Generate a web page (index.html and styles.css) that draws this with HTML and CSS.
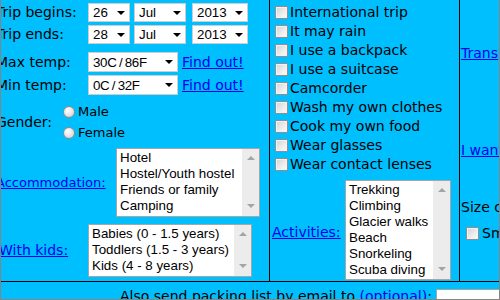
FILE: index.html
```html
<!DOCTYPE html>
<html lang="en">
<head>
<meta charset="utf-8">
<title>Packing list</title>
<link rel="stylesheet" href="styles.css">
</head>
<body>
<div class="frame">
  <div class="table">
    <div class="cell c1">
      <div class="row r-date">
        <span class="lbl w92">Trip begins:</span>
        <span class="sel s-day"><select><option>26</option></select></span>
        <span class="sel s-mon"><select><option>Jul</option></select></span>
        <span class="sel s-year"><select><option>2013</option></select></span>
      </div>
      <div class="row r-date r-date2">
        <span class="lbl w92">Trip ends:</span>
        <span class="sel s-day"><select><option>28</option></select></span>
        <span class="sel s-mon"><select><option>Jul</option></select></span>
        <span class="sel s-year"><select><option>2013</option></select></span>
      </div>
      <div class="row r-temp r-temp1">
        <span class="lbl w92">Max temp:</span>
        <span class="sel s-temp"><select class="tight"><option>30C / 86F</option></select></span>
        <a href="#" class="find">Find out!</a>
      </div>
      <div class="row r-temp r-temp2">
        <span class="lbl w92">Min temp:</span>
        <span class="sel s-temp"><select class="tight"><option>0C / 32F</option></select></span>
        <a href="#" class="find">Find out!</a>
      </div>
      <div class="row r-gender">
        <span class="lbl gender-lbl">Gender:</span>
        <div class="radios">
          <label class="radio-row"><input type="radio" name="g" class="radio"><span>Male</span></label>
          <label class="radio-row"><input type="radio" name="g" class="radio"><span>Female</span></label>
        </div>
      </div>
      <div class="row r-acc">
        <a href="#" class="lbl acc-lbl">Accommodation:</a>
        <div class="listbox acc-box">
          <ul>
            <li>Hotel</li>
            <li>Hostel/Youth hostel</li>
            <li>Friends or family</li>
            <li>Camping</li>
          </ul>
          <div class="sb"><span class="up"></span><span class="down"></span></div>
        </div>
      </div>
      <div class="row r-kids">
        <a href="#" class="lbl kids-lbl">With kids:</a>
        <div class="listbox kids-box">
          <ul>
            <li>Babies (0 - 1.5 years)</li>
            <li>Toddlers (1.5 - 3 years)</li>
            <li>Kids (4 - 8 years)</li>
          </ul>
          <div class="sb"><span class="up"></span><span class="down"></span></div>
        </div>
      </div>
    </div>

    <div class="cell c2">
      <label class="chk-row"><input type="checkbox" class="chk"><span>International trip</span></label>
      <label class="chk-row"><input type="checkbox" class="chk"><span>It may rain</span></label>
      <label class="chk-row"><input type="checkbox" class="chk"><span>I use a backpack</span></label>
      <label class="chk-row"><input type="checkbox" class="chk"><span>I use a suitcase</span></label>
      <label class="chk-row"><input type="checkbox" class="chk"><span>Camcorder</span></label>
      <label class="chk-row"><input type="checkbox" class="chk"><span>Wash my own clothes</span></label>
      <label class="chk-row"><input type="checkbox" class="chk"><span>Cook my own food</span></label>
      <label class="chk-row"><input type="checkbox" class="chk"><span>Wear glasses</span></label>
      <label class="chk-row"><input type="checkbox" class="chk"><span>Wear contact lenses</span></label>
      <div class="r-act">
        <a href="#" class="act-lbl">Activities:</a>
        <div class="listbox act-box">
          <ul>
            <li>Trekking</li>
            <li>Climbing</li>
            <li>Glacier walks</li>
            <li>Beach</li>
            <li>Snorkeling</li>
            <li>Scuba diving</li>
          </ul>
          <div class="sb"><span class="up"></span><span class="down"></span></div>
        </div>
      </div>
    </div>

    <div class="cell c3">
      <a href="#" class="r3-1">Transportation:</a>
      <a href="#" class="r3-2">I want to pack light</a>
      <span class="r3-3">Size of luggage:</span>
      <label class="chk-row r3-4"><input type="checkbox" class="chk"><span>Small</span></label>
    </div>

    <div class="bottom">
      <span>Also send packing list by email to <a href="#">(optional)</a>:</span>
      <input type="text" class="email">
    </div>
  </div>
</div>
</body>
</html>
```

FILE: styles.css
```css
* { box-sizing: border-box; }

html, body {
  margin: 0;
  padding: 0;
}

body {
  background: #00bfff;
  font-family: "DejaVu Sans", Verdana, sans-serif;
  font-size: 14px;
  line-height: 17px;
  color: #000;
}

a {
  color: #0000ee;
  text-decoration: underline;
}

.frame {
  width: 500px;
  height: 300px;
  border: 1px solid #858585;
  border-top: 0;
  overflow: hidden;
}

.table {
  margin-left: -5px;
  width: 540px;
  display: grid;
  grid-template-columns: 274px 190px 1fr;
}

.cell {
  height: 282px;
  border-bottom: 1px solid #000;
}

.c1, .c2 { border-right: 1px solid #000; }

/* ---------- left column ---------- */
.c1 {
  padding-top: 3px;
  display: flex;
  flex-direction: column;
}

.row {
  display: flex;
  align-items: center;
  white-space: nowrap;
}

.lbl { flex: none; white-space: nowrap; }
.w92 { width: 92px; }

.r-date { height: 19px; }
.r-date2 { margin-top: 3px; }
.r-temp { height: 20px; }
.r-temp1 { margin-top: 8px; }
.r-temp2 { margin-top: 3px; }

.sel {
  position: relative;
  flex: none;
  height: 100%;
  border: 1px solid #cdcdcd;
  background: #fff;
}

.sel select {
  -webkit-appearance: none;
  appearance: none;
  display: block;
  width: 100%;
  height: 100%;
  margin: 0;
  padding: 0 0 0 4px;
  border: 0;
  background: transparent;
  font: 13.33px "Liberation Sans", Arial, sans-serif;
  color: #000;
  outline: none;
}

.sel select.tight { word-spacing: -1px; letter-spacing: -0.3px; }

.sel::after {
  content: "";
  position: absolute;
  right: 4px;
  top: 50%;
  margin-top: -2px;
  border-left: 4px solid transparent;
  border-right: 4px solid transparent;
  border-top: 4px solid #000;
  pointer-events: none;
}

.s-day { width: 42px; margin-right: 4px; }
.s-mon { width: 52px; margin-right: 6px; }
.s-year { width: 56px; }
.s-temp { width: 90px; margin-right: 4px; }

.r-gender {
  height: 42px;
  margin-top: 6px;
}

.gender-lbl { width: 64px; }

.radios {
  display: flex;
  flex-direction: column;
}

.radio-row {
  height: 21px;
  display: flex;
  align-items: center;
  font-size: 13px;
}

.radio {
  -webkit-appearance: none;
  appearance: none;
  flex: none;
  width: 12px;
  height: 12px;
  margin: 0 3px 0 3px;
  border-radius: 50%;
  border: 1px solid #8c8c8c;
  background: radial-gradient(circle at 40% 35%, #ffffff 0%, #e4e4e4 55%, #c4c4c4 100%);
}

.r-acc {
  height: 69px;
  margin-top: 5px;
}

.acc-lbl { width: 120px; font-size: 13px; }
.acc-box { width: 144px; }

.r-kids {
  height: 53px;
  margin-top: 7px;
}

.kids-lbl { width: 92px; padding-left: 3px; }
.kids-box { width: 164px; }

/* ---------- list boxes ---------- */
.listbox {
  display: flex;
  height: 100%;
  border: 1px solid #a6a6a6;
  background: #fff;
}

.listbox ul {
  flex: 1;
  min-width: 0;
  margin: 0;
  padding: 1px 0 0 3px;
  list-style: none;
  overflow: hidden;
  white-space: nowrap;
  font: 13.33px/16px "Liberation Sans", Arial, sans-serif;
  color: #000;
}

.sb {
  flex: none;
  width: 17px;
  background: #ececec;
  display: flex;
  flex-direction: column;
  justify-content: space-between;
  align-items: center;
  padding: 7px 0 8px;
}

.sb .up {
  border-left: 4px solid transparent;
  border-right: 4px solid transparent;
  border-bottom: 4px solid #a3a3a3;
}

.sb .down {
  border-left: 4px solid transparent;
  border-right: 4px solid transparent;
  border-top: 4px solid #a3a3a3;
}

/* ---------- middle column ---------- */
.c2 {
  padding-top: 3px;
  display: flex;
  flex-direction: column;
}

.chk-row {
  height: 19px;
  display: flex;
  align-items: center;
  white-space: nowrap;
}

.chk {
  -webkit-appearance: none;
  appearance: none;
  flex: none;
  width: 13px;
  height: 13px;
  margin: 0 2px 0 5px;
  border: 1px solid #8e8f8f;
  background: linear-gradient(135deg, #d2d2d2 0%, #eeeeee 60%, #fbfbfb 100%);
  box-shadow: inset 0 0 0 1px #f2f2f2;
}

.r-act {
  height: 100px;
  margin-top: 6px;
  display: flex;
  align-items: center;
}

.act-lbl {
  width: 75px;
  flex: none;
  padding-left: 2px;
  padding-top: 4px;
}

.act-box { width: 106px; }

/* ---------- right column ---------- */
.c3 {
  padding: 45px 0 0 1px;
  display: flex;
  flex-direction: column;
  align-items: flex-start;
  white-space: nowrap;
}

.r3-2 { margin-top: 80px; }
.r3-3 { margin-top: 40px; }
.r3-4 { margin-top: 8px; }
.r3-4 .chk { margin-left: 5px; margin-right: 3px; }

/* ---------- bottom row ---------- */
.bottom {
  grid-column: 1 / -1;
  padding: 6px 0 0 124px;
  display: flex;
  align-items: flex-start;
  white-space: nowrap;
}

.email {
  flex: none;
  width: 140px;
  height: 21px;
  margin: 1px 0 0 4px;
  border: 1px solid #a5a5a5;
  background: #fff;
}
```
